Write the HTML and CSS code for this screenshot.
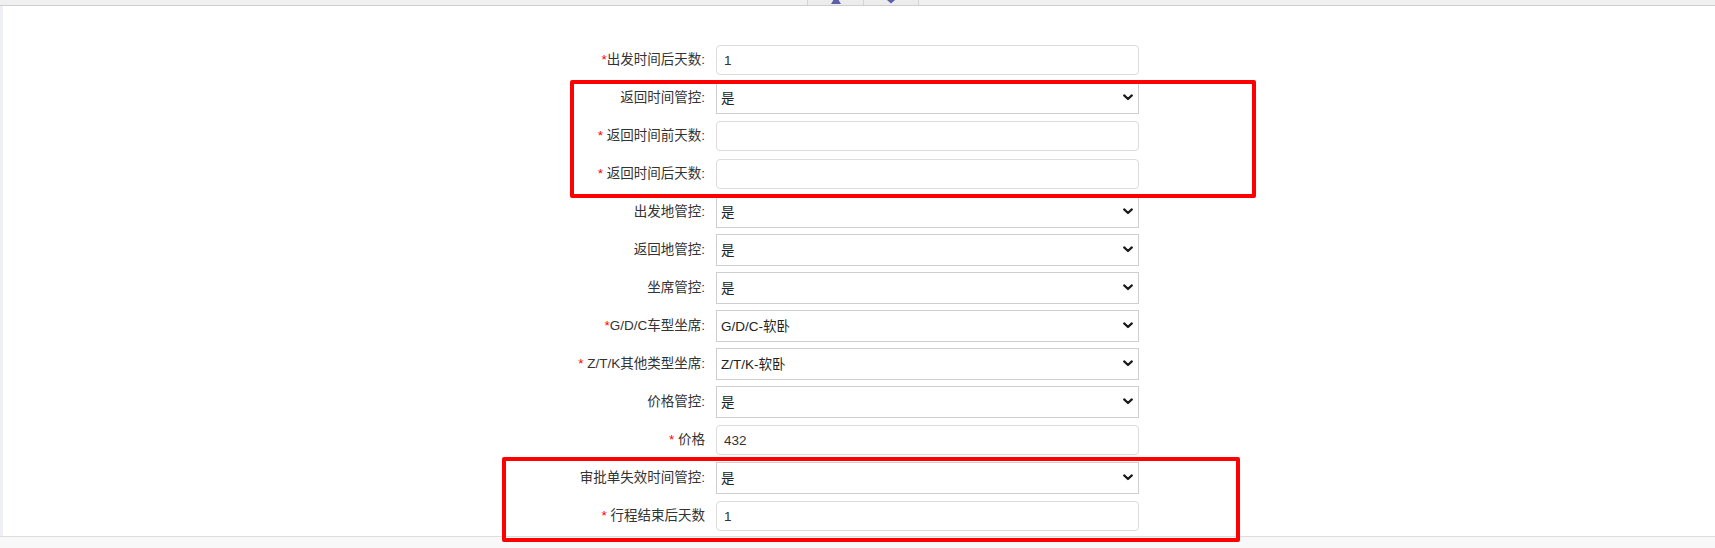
FILE: index.html
```html
<!DOCTYPE html>
<html lang="zh-CN">
<head>
<meta charset="utf-8">
<title>火车票管控设置</title>
<link rel="stylesheet" href="styles.css">
</head>
<body>
<div class="topbar">
  <div class="tools">
    <button class="tool" type="button" title="上移">
      <svg width="12" height="5" viewBox="0 0 12 5"><polygon points="1,4 11,4 8.6,0 3.4,0" fill="#5b5fa8"/></svg>
    </button>
    <button class="tool" type="button" title="下移">
      <svg width="12" height="5" viewBox="0 0 12 5"><polygon points="2,0 10,0 6,3.5" fill="#5b5fa8"/></svg>
    </button>
  </div>
</div>
<div class="layout">
  <div class="side"></div>
  <div class="main">
    <form class="form">
      <label class="lbl"><span class="req">*</span>出发时间后天数:</label>
      <input class="ipt" type="text" value="1">

      <label class="lbl">返回时间管控:</label>
      <div class="selbox"><select class="sel"><option>是</option><option>否</option></select><svg class="caret" viewBox="0 0 10 7"><path d="M1.2 1.4 L5 5 L8.8 1.4"/></svg></div>

      <label class="lbl"><span class="req">* </span>返回时间前天数:</label>
      <input class="ipt" type="text" value="">

      <label class="lbl"><span class="req">* </span>返回时间后天数:</label>
      <input class="ipt" type="text" value="">

      <label class="lbl">出发地管控:</label>
      <div class="selbox"><select class="sel"><option>是</option><option>否</option></select><svg class="caret" viewBox="0 0 10 7"><path d="M1.2 1.4 L5 5 L8.8 1.4"/></svg></div>

      <label class="lbl">返回地管控:</label>
      <div class="selbox"><select class="sel"><option>是</option><option>否</option></select><svg class="caret" viewBox="0 0 10 7"><path d="M1.2 1.4 L5 5 L8.8 1.4"/></svg></div>

      <label class="lbl">坐席管控:</label>
      <div class="selbox"><select class="sel"><option>是</option><option>否</option></select><svg class="caret" viewBox="0 0 10 7"><path d="M1.2 1.4 L5 5 L8.8 1.4"/></svg></div>

      <label class="lbl"><span class="req">*</span>G/D/C车型坐席:</label>
      <div class="selbox"><select class="sel"><option>G/D/C-软卧</option><option>G/D/C-二等座</option></select><svg class="caret" viewBox="0 0 10 7"><path d="M1.2 1.4 L5 5 L8.8 1.4"/></svg></div>

      <label class="lbl"><span class="req">* </span>Z/T/K其他类型坐席:</label>
      <div class="selbox"><select class="sel"><option>Z/T/K-软卧</option><option>Z/T/K-硬卧</option></select><svg class="caret" viewBox="0 0 10 7"><path d="M1.2 1.4 L5 5 L8.8 1.4"/></svg></div>

      <label class="lbl">价格管控:</label>
      <div class="selbox"><select class="sel"><option>是</option><option>否</option></select><svg class="caret" viewBox="0 0 10 7"><path d="M1.2 1.4 L5 5 L8.8 1.4"/></svg></div>

      <label class="lbl"><span class="req">* </span>价格</label>
      <input class="ipt" type="text" value="432">

      <label class="lbl">审批单失效时间管控:</label>
      <div class="selbox"><select class="sel"><option>是</option><option>否</option></select><svg class="caret" viewBox="0 0 10 7"><path d="M1.2 1.4 L5 5 L8.8 1.4"/></svg></div>

      <label class="lbl"><span class="req">* </span>行程结束后天数</label>
      <input class="ipt" type="text" value="1">
    </form>
  </div>
</div>
<div class="footer"></div>

<div class="mark mark-return"></div>
<div class="mark mark-expire"></div>
</body>
</html>
```

FILE: styles.css
```css
html, body {
  margin: 0;
  padding: 0;
  background: #fff;
}

body {
  position: relative;
  width: 1715px;
  height: 548px;
  overflow: hidden;
  font-family: "Liberation Sans", "Noto Sans CJK SC", sans-serif;
  font-size: 13.5px;
  color: #333;
}

/* toolbar strip along the top edge */
.topbar {
  height: 5px;
  background: #f0f0f0;
  border-bottom: 1px solid #cfcfcf;
  display: flex;
}

.tools {
  display: flex;
  margin-left: 807px;
}

.tool {
  width: 56px;
  height: 5px;
  padding: 0;
  margin: 0;
  border: 0;
  border-left: 1px solid #d4d4d4;
  background: #ececec;
  display: flex;
  justify-content: center;
  align-items: flex-start;
  overflow: hidden;
}

.tool:last-child {
  border-right: 1px solid #d4d4d4;
}

.tool svg {
  display: block;
}

/* page body */
.layout {
  display: flex;
  height: 530px;
}

.side {
  width: 3px;
  background: #eef0f4;
}

.main {
  flex: 1;
  background: #fff;
}

.form {
  display: grid;
  grid-template-columns: 200px 423px;
  grid-auto-rows: 38px;
  column-gap: 11px;
  align-items: center;
  margin: 0 0 0 502px;
  padding-top: 35px;
}

.lbl {
  text-align: right;
  color: #333;
  white-space: nowrap;
  line-height: 18px;
}

.req {
  color: #f00;
  white-space: pre;
}

.ipt {
  box-sizing: border-box;
  height: 30px;
  width: 423px;
  margin: 0;
  padding: 0 7px;
  border: 1px solid #dcdcdc;
  border-radius: 4px;
  background: #fff;
  font-family: "Liberation Sans", "Noto Sans CJK SC", sans-serif;
  font-size: 13.5px;
  color: #333;
  outline: none;
}

.selbox {
  position: relative;
  width: 423px;
  height: 32px;
}

.sel {
  box-sizing: border-box;
  display: block;
  height: 32px;
  width: 423px;
  margin: 0;
  padding: 0 24px 0 4px;
  border: 1px solid #cfcfcf;
  border-radius: 0;
  background-color: #fff;
  -webkit-appearance: none;
  appearance: none;
  font-family: "Liberation Sans", "Noto Sans CJK SC", sans-serif;
  font-size: 13.5px;
  color: #222;
  outline: none;
}

/* dropdown chevron sitting over the right end of each select */
.caret {
  position: absolute;
  right: 6px;
  top: 12px;
  width: 10px;
  height: 7px;
  pointer-events: none;
  fill: none;
  stroke: #1a1a1a;
  stroke-width: 2.2;
  stroke-linecap: round;
  stroke-linejoin: round;
}

.footer {
  height: 11px;
  border-top: 1px solid #dddddd;
  background: #f8f8f8;
}

/* highlight frames drawn over the form */
.mark {
  position: absolute;
  box-sizing: border-box;
  border: 4px solid #ff0000;
  border-radius: 2px;
  pointer-events: none;
}

.mark-return {
  left: 570px;
  top: 80px;
  width: 686px;
  height: 118px;
}

.mark-expire {
  left: 502px;
  top: 457px;
  width: 738px;
  height: 85px;
}
```
